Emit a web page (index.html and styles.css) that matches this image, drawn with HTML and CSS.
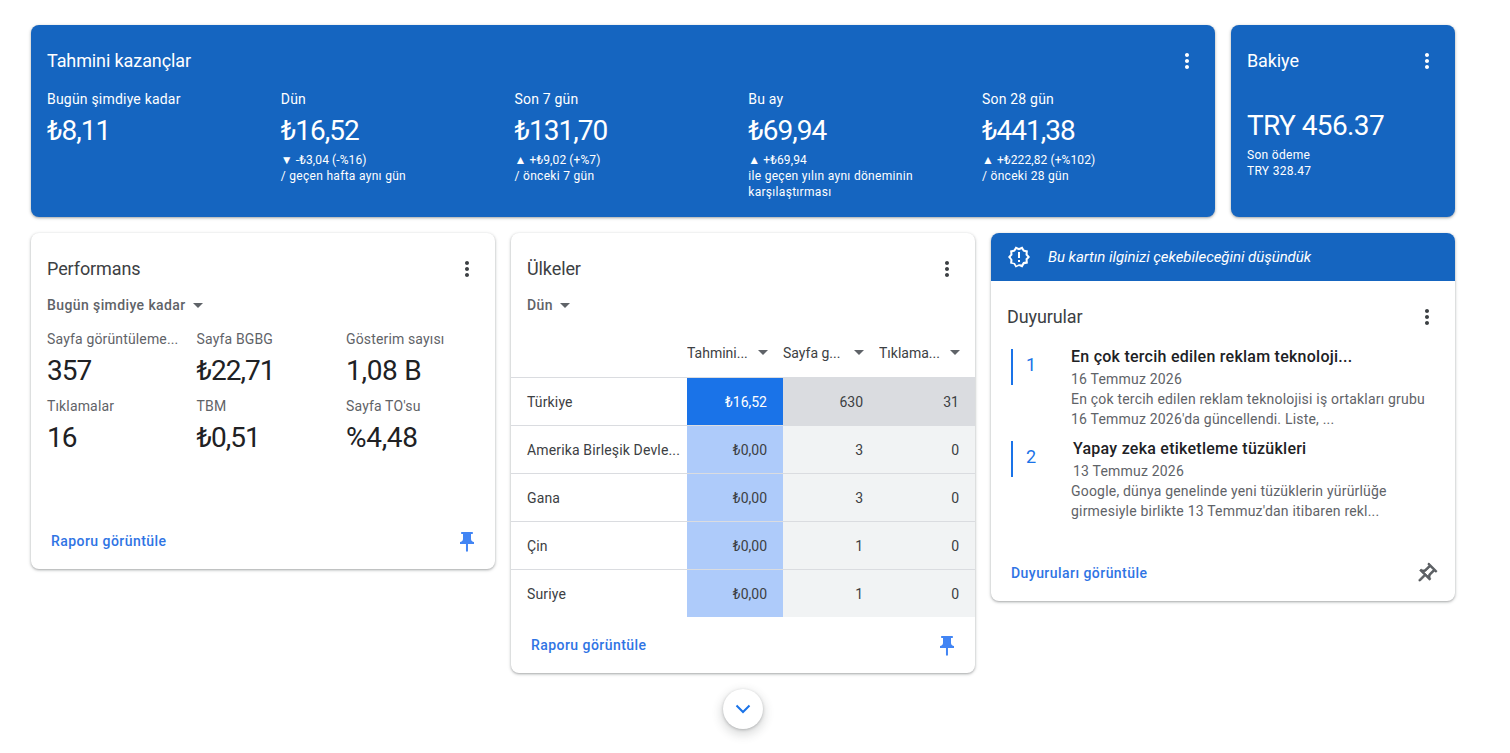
FILE: index.html
```html
<!DOCTYPE html>
<html lang="tr">
<head>
    <meta charset="UTF-8">
    <meta name="viewport" content="width=device-width, initial-scale=1.0">
    <title>Ana sayfa</title>
    <link rel="stylesheet" href="styles.css">
</head>
<body>
    <svg class="icon-defs" width="0" height="0" aria-hidden="true">
        <symbol id="dots" viewBox="0 0 24 24"><path d="M12 8c1.1 0 2-.9 2-2s-.9-2-2-2-2 .9-2 2 .9 2 2 2zm0 2c-1.1 0-2 .9-2 2s.9 2 2 2 2-.9 2-2-.9-2-2-2zm0 6c-1.1 0-2 .9-2 2s.9 2 2 2 2-.9 2-2-.9-2-2-2z"/></symbol>
        <symbol id="pin" viewBox="0 0 24 24"><path d="M16 9V4h1c.55 0 1-.45 1-1s-.45-1-1-1H7c-.55 0-1 .45-1 1s.45 1 1 1h1v5c0 1.66-1.34 3-3 3v2h5.97v7l1 1 1-1v-7H19v-2c-1.66 0-3-1.34-3-3z"/></symbol>
        <symbol id="pin-outline" viewBox="0 0 24 24"><path d="M14 4v5c0 1.12.37 2.16 1 3H9c.65-.86 1-1.9 1-3V4h4m3-2H7c-.55 0-1 .45-1 1s.45 1 1 1h1v5c0 1.66-1.34 3-3 3v2h5.97v7l1 1 1-1v-7H19v-2c-1.66 0-3-1.34-3-3V4h1c.55 0 1-.45 1-1s-.45-1-1-1z"/></symbol>
    </svg>

    <main class="page">
        <div class="row row-top">
            <section class="card card-blue earnings">
                <div class="card-head">
                    <h2 class="card-title">Tahmini kazançlar</h2>
                    <button class="more-btn"><svg><use href="#dots"/></svg></button>
                </div>
                <div class="earn-grid">
                    <div class="earn-col">
                        <div class="earn-label">Bugün şimdiye kadar</div>
                        <div class="earn-value">₺8,11</div>
                    </div>
                    <div class="earn-col">
                        <div class="earn-label">Dün</div>
                        <div class="earn-value">₺16,52</div>
                        <div class="earn-note"><span class="earn-delta">▼ -₺3,04 (-%16)</span><br>/ geçen hafta aynı gün</div>
                    </div>
                    <div class="earn-col">
                        <div class="earn-label">Son 7 gün</div>
                        <div class="earn-value">₺131,70</div>
                        <div class="earn-note"><span class="earn-delta">▲ +₺9,02 (+%7)</span><br>/ önceki 7 gün</div>
                    </div>
                    <div class="earn-col">
                        <div class="earn-label">Bu ay</div>
                        <div class="earn-value">₺69,94</div>
                        <div class="earn-note"><span class="earn-delta">▲ +₺69,94</span><br>ile geçen yılın aynı döneminin karşılaştırması</div>
                    </div>
                    <div class="earn-col">
                        <div class="earn-label">Son 28 gün</div>
                        <div class="earn-value">₺441,38</div>
                        <div class="earn-note"><span class="earn-delta">▲ +₺222,82 (+%102)</span><br>/ önceki 28 gün</div>
                    </div>
                </div>
            </section>

            <section class="card card-blue balance">
                <div class="card-head">
                    <h2 class="card-title">Bakiye</h2>
                    <button class="more-btn"><svg><use href="#dots"/></svg></button>
                </div>
                <div class="balance-value">TRY 456.37</div>
                <div class="earn-note">Son ödeme<br>TRY 328.47</div>
            </section>
        </div>

        <div class="row row-cards">
            <section class="card performance">
                <div class="card-head">
                    <h2 class="card-title">Performans</h2>
                    <button class="more-btn"><svg><use href="#dots"/></svg></button>
                </div>
                <div class="dropdown">Bugün şimdiye kadar <span class="caret"></span></div>
                <div class="metrics">
                    <div class="metric">
                        <div class="metric-label">Sayfa görüntüleme...</div>
                        <div class="metric-value">357</div>
                    </div>
                    <div class="metric">
                        <div class="metric-label">Sayfa BGBG</div>
                        <div class="metric-value">₺22,71</div>
                    </div>
                    <div class="metric">
                        <div class="metric-label">Gösterim sayısı</div>
                        <div class="metric-value metric-value-wide">1,08 B</div>
                    </div>
                    <div class="metric">
                        <div class="metric-label">Tıklamalar</div>
                        <div class="metric-value">16</div>
                    </div>
                    <div class="metric">
                        <div class="metric-label">TBM</div>
                        <div class="metric-value">₺0,51</div>
                    </div>
                    <div class="metric">
                        <div class="metric-label">Sayfa TO'su</div>
                        <div class="metric-value metric-value-wide">%4,48</div>
                    </div>
                </div>
                <div class="card-foot">
                    <a href="#" class="foot-link">Raporu görüntüle</a>
                    <svg class="pin-icon"><use href="#pin"/></svg>
                </div>
            </section>

            <div class="mid-col">
                <section class="card countries">
                    <div class="card-head">
                        <h2 class="card-title">Ülkeler</h2>
                        <button class="more-btn"><svg><use href="#dots"/></svg></button>
                    </div>
                    <div class="dropdown">Dün <span class="caret"></span></div>
                    <div class="table">
                        <div class="tr tr-head">
                            <div class="th"></div>
                            <div class="th"><span class="th-text">Tahmini...</span><span class="caret"></span></div>
                            <div class="th"><span class="th-text">Sayfa g...</span><span class="caret"></span></div>
                            <div class="th"><span class="th-text">Tıklama...</span><span class="caret"></span></div>
                        </div>
                        <div class="tr">
                            <div class="td td-name">Türkiye</div>
                            <div class="td heat-blue-strong">₺16,52</div>
                            <div class="td heat-grey-strong">630</div>
                            <div class="td heat-grey-strong">31</div>
                        </div>
                        <div class="tr">
                            <div class="td td-name">Amerika Birleşik Devle...</div>
                            <div class="td heat-blue">₺0,00</div>
                            <div class="td heat-grey">3</div>
                            <div class="td heat-grey">0</div>
                        </div>
                        <div class="tr">
                            <div class="td td-name">Gana</div>
                            <div class="td heat-blue">₺0,00</div>
                            <div class="td heat-grey">3</div>
                            <div class="td heat-grey">0</div>
                        </div>
                        <div class="tr">
                            <div class="td td-name">Çin</div>
                            <div class="td heat-blue">₺0,00</div>
                            <div class="td heat-grey">1</div>
                            <div class="td heat-grey">0</div>
                        </div>
                        <div class="tr">
                            <div class="td td-name">Suriye</div>
                            <div class="td heat-blue">₺0,00</div>
                            <div class="td heat-grey">1</div>
                            <div class="td heat-grey">0</div>
                        </div>
                    </div>
                    <div class="card-foot">
                        <a href="#" class="foot-link">Raporu görüntüle</a>
                        <svg class="pin-icon"><use href="#pin"/></svg>
                    </div>
                </section>
                <button class="scroll-btn">
                    <svg viewBox="0 0 24 24"><path d="M5.5 8.5 12 15l6.5-6.5" fill="none" stroke="currentColor" stroke-width="2"/></svg>
                </button>
            </div>

            <section class="card news">
                <div class="news-banner">
                    <svg class="banner-icon" viewBox="0 0 24 24"><path d="M23 12l-2.44-2.78.34-3.68-3.61-.82-1.89-3.18L12 3 8.6 1.54 6.71 4.72l-3.61.81.34 3.68L1 12l2.44 2.78-.34 3.69 3.61.82 1.89 3.18L12 21l3.4 1.46 1.89-3.18 3.61-.82-.34-3.68L23 12zm-4.51 1.69.26 2.77-2.71.61-1.42 2.4L12 19.37l-2.62 1.1-1.42-2.4-2.71-.61.26-2.78L3.66 12l1.85-2.12-.26-2.75 2.71-.6 1.42-2.4L12 5.23l2.62-1.1 1.42 2.4 2.71.61-.26 2.76L20.34 12l-1.85 1.69zM11 15h2v2h-2zm0-8h2v6h-2z"/></svg>
                    <span>Bu kartın ilginizi çekebileceğini düşündük</span>
                </div>
                <div class="card-head">
                    <h2 class="card-title">Duyurular</h2>
                    <button class="more-btn"><svg><use href="#dots"/></svg></button>
                </div>
                <div class="news-list">
                    <div class="news-item">
                        <div class="news-num">1</div>
                        <div class="news-body">
                            <div class="news-head">
                                <div class="news-title">En çok tercih edilen reklam teknoloji...</div>
                                <div class="news-text">16 Temmuz 2026</div>
                            </div>
                            <div class="news-text">En çok tercih edilen reklam teknolojisi iş ortakları grubu 16 Temmuz 2026'da güncellendi. Liste, ...</div>
                        </div>
                    </div>
                    <div class="news-item news-item-two">
                        <div class="news-num">2</div>
                        <div class="news-body">
                            <div class="news-head">
                                <div class="news-title">Yapay zeka etiketleme tüzükleri</div>
                                <div class="news-text">13 Temmuz 2026</div>
                            </div>
                            <div class="news-text">Google, dünya genelinde yeni tüzüklerin yürürlüğe girmesiyle birlikte 13 Temmuz'dan itibaren rekl...</div>
                        </div>
                    </div>
                </div>
                <div class="card-foot">
                    <a href="#" class="foot-link">Duyuruları görüntüle</a>
                    <svg class="pin-icon pin-off"><use href="#pin-outline"/></svg>
                </div>
            </section>
        </div>
    </main>
</body>
</html>
```

FILE: styles.css
```css
/* Reset & Variables */
* {
    margin: 0;
    padding: 0;
    box-sizing: border-box;
}

:root {
    --blue-dark: #1565c0;
    --blue: #1a73e8;
    --blue-link: #2f74e4;
    --blue-light: #aecbfa;
    --grey-strong: #dadce0;
    --grey-light: #f1f3f4;
    --line: #dadce0;
    --text: #202124;
    --text-mid: #3c4043;
    --text-soft: #5f6368;
}

body {
    font-family: Roboto, "Noto Sans", sans-serif;
    color: var(--text);
    background-color: #fff;
    min-height: 100vh;
    overflow: hidden;
}

.icon-defs {
    display: block;
    height: 0;
}

.page {
    width: 1424px;
    margin-left: 31px;
    padding-top: 25px;
    display: flex;
    flex-direction: column;
    gap: 16px;
}

.row {
    display: flex;
    align-items: flex-start;
    gap: 16px;
}

/* Cards */
.card {
    background-color: #fff;
    border-radius: 8px;
    box-shadow: 0 1px 2px rgba(60, 64, 67, 0.3), 0 1px 3px 1px rgba(60, 64, 67, 0.15);
}

.card-blue {
    background-color: var(--blue-dark);
    color: #fff;
    height: 192px;
}

.card-head {
    display: flex;
    justify-content: space-between;
    align-items: center;
    padding: 24px 16px 0;
    height: 48px;
}

.card-title {
    font-size: 18px;
    font-weight: 400;
    line-height: 24px;
    letter-spacing: -0.1px;
    color: var(--text-mid);
}

.card-blue .card-title {
    color: #fff;
}

.more-btn {
    width: 24px;
    height: 24px;
    border: none;
    background: none;
    color: inherit;
}

.more-btn svg {
    display: block;
    width: 24px;
    height: 24px;
    fill: currentColor;
}

.card:not(.card-blue) .more-btn {
    color: var(--text-mid);
}

/* Earnings */
.earnings {
    width: 1184px;
}

.earn-grid {
    display: grid;
    grid-template-columns: repeat(5, 233.75px);
    padding: 16px 16px 0;
}

.earn-label {
    font-size: 14px;
    line-height: 20px;
    letter-spacing: 0.2px;
}

.earn-value {
    font-size: 28px;
    line-height: 36px;
    margin-top: 4px;
    letter-spacing: -1px;
}

.earn-note {
    font-size: 12px;
    line-height: 16px;
    margin-top: 3px;
    padding-right: 40px;
    letter-spacing: 0.3px;
}

.earn-delta {
    letter-spacing: 0.1px;
}

/* Balance */
.balance {
    width: 224px;
}

.balance-value {
    font-size: 28px;
    line-height: 36px;
    padding: 35px 16px 0;
    letter-spacing: -0.6px;
}

.balance .earn-note {
    padding: 0 16px;
    margin-top: 3px;
}

/* Performance */
.performance {
    width: 464px;
    height: 336px;
    display: flex;
    flex-direction: column;
}

.dropdown {
    display: flex;
    align-items: center;
    gap: 7px;
    font-size: 14px;
    font-weight: 500;
    color: var(--text-soft);
    padding: 14px 16px 0;
    line-height: 20px;
    letter-spacing: 0.4px;
}

.caret {
    display: inline-block;
    width: 0;
    height: 0;
    border-left: 5px solid transparent;
    border-right: 5px solid transparent;
    border-top: 5px solid var(--text-soft);
}

.metrics {
    display: grid;
    grid-template-columns: repeat(3, 149.5px);
    row-gap: 7px;
    padding: 14px 16px 0;
}

.metric-label {
    font-size: 14px;
    line-height: 20px;
    color: var(--text-soft);
    white-space: nowrap;
    letter-spacing: 0.15px;
}

.metric-value {
    font-size: 28px;
    line-height: 36px;
    margin-top: 4px;
    color: var(--text);
    letter-spacing: -1px;
}

.metric-value-wide {
    letter-spacing: -0.3px;
}

.card-foot {
    display: flex;
    justify-content: space-between;
    align-items: center;
    height: 56px;
    margin-top: auto;
    padding: 0 16px 0 20px;
}

.foot-link {
    font-size: 14px;
    font-weight: 500;
    letter-spacing: 0.45px;
    color: var(--blue-link);
    text-decoration: none;
}

.pin-icon {
    width: 24px;
    height: 24px;
    margin-top: 2px;
    fill: #4285f4;
}

.pin-off {
    margin: 1px 1px 0 0;
    fill: var(--text-soft);
    stroke: var(--text-mid);
    stroke-width: 0.5px;
    transform: rotate(45deg);
}

/* Countries */
.mid-col {
    width: 464px;
    display: flex;
    flex-direction: column;
    align-items: center;
}

.countries {
    width: 464px;
    height: 440px;
    display: flex;
    flex-direction: column;
}

.table {
    margin-top: 13px;
}

.tr {
    display: grid;
    grid-template-columns: 176px 96px 96px 96px;
    height: 48px;
    border-bottom: 1px solid var(--line);
}

.tr:last-child {
    height: 47px;
    border-bottom: none;
}

.tr-head {
    height: 50px;
}

.th {
    display: flex;
    align-items: center;
    justify-content: space-between;
    padding-right: 15px;
    font-size: 14px;
    color: var(--text-mid);
    white-space: nowrap;
    overflow: hidden;
}

.th .caret {
    flex: none;
}

.td {
    display: flex;
    align-items: center;
    justify-content: flex-end;
    padding-right: 16px;
    font-size: 14px;
    color: var(--text-mid);
    white-space: nowrap;
    overflow: hidden;
}

.td-name {
    justify-content: flex-start;
    padding: 0 8px 0 16px;
    letter-spacing: 0.15px;
}

.heat-blue-strong {
    background-color: var(--blue);
    color: #fff;
}

.heat-blue {
    background-color: var(--blue-light);
}

.heat-grey-strong {
    background-color: var(--grey-strong);
}

.heat-grey {
    background-color: var(--grey-light);
}

.scroll-btn {
    width: 40px;
    height: 40px;
    margin-top: 16px;
    border: none;
    border-radius: 50%;
    background-color: #fff;
    color: var(--blue);
    box-shadow: 0 1px 3px rgba(60, 64, 67, 0.3), 0 4px 8px 3px rgba(60, 64, 67, 0.15);
    display: flex;
    align-items: center;
    justify-content: center;
}

.scroll-btn svg {
    width: 24px;
    height: 24px;
}

/* Announcements */
.news {
    width: 464px;
    height: 368px;
    display: flex;
    flex-direction: column;
}

.news-banner {
    height: 48px;
    background-color: var(--blue-dark);
    border-radius: 8px 8px 0 0;
    color: #fff;
    display: flex;
    align-items: center;
    gap: 17px;
    padding-left: 16px;
    font-size: 15px;
    font-style: italic;
    letter-spacing: -0.05px;
}

.banner-icon {
    width: 24px;
    height: 24px;
    fill: #fff;
}

.news-list {
    display: flex;
    flex-direction: column;
    gap: 8px;
    padding: 16px 16px 0 20px;
}

.news-item {
    display: flex;
}

.news-num {
    flex: none;
    width: 60px;
    height: 36px;
    margin-top: 4px;
    border-left: 2px solid var(--blue);
    padding-left: 13px;
    font-size: 18px;
    line-height: 32px;
    color: var(--blue);
}

.news-item-two .news-head {
    margin-left: 2px;
}

.news-title {
    font-size: 16px;
    font-weight: 500;
    line-height: 24px;
    letter-spacing: 0.25px;
    color: var(--text);
}

.news-text {
    font-size: 14px;
    line-height: 20px;
    color: var(--text-soft);
    letter-spacing: 0.2px;
}
```
